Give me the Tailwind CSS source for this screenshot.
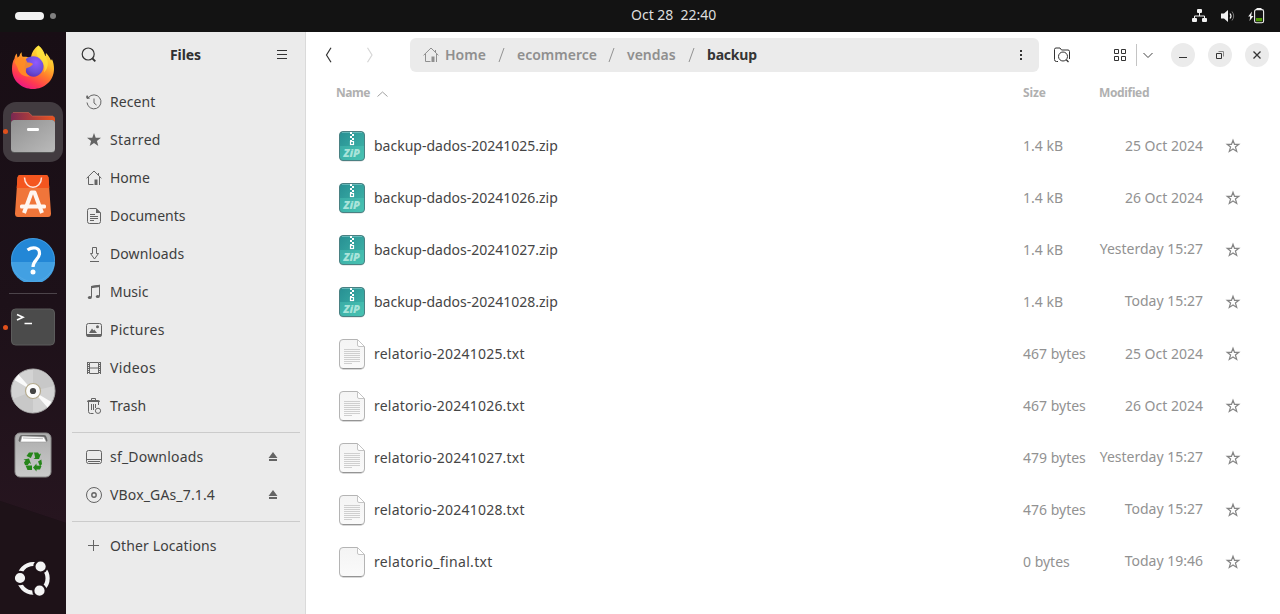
<!DOCTYPE html>
<html lang="en">
<head>
<meta charset="utf-8">
<title>Files</title>
<script src="https://cdn.jsdelivr.net/npm/@tailwindcss/browser@4"></script>
</head>
<body class="h-[614px] w-[1280px] overflow-hidden bg-white font-['Noto_Sans','Open_Sans',sans-serif] text-[14px] text-[#454545]">
<svg width="0" height="0" class="absolute">
  <defs>
    <linearGradient id="teal" x1="0" y1="0" x2="1" y2="1"><stop offset="0" stop-color="#278f93"/><stop offset="1" stop-color="#41b9ab"/></linearGradient>
    <linearGradient id="paper" x1="0" y1="0" x2="0" y2="1"><stop offset="0" stop-color="#f4f4f4"/><stop offset="1" stop-color="#fafafa"/></linearGradient>
    <symbol id="zip" viewBox="0 0 28 32">
      <rect x="1.5" y="2" width="25" height="29.6" rx="4" fill="#000" opacity=".18"/>
      <rect x="1.5" y="1.5" width="25" height="29" rx="3.5" fill="url(#teal)" stroke="#4a8082"/>
      <path d="M2 16h24v11a3 3 0 0 1-3 3H5a3 3 0 0 1-3-3z" fill="#5fe0c8" opacity=".28"/>
      <path d="M4 2.5h20" stroke="#7cc7c8" opacity=".7"/>
      <path d="M12 2h2v2h-2zM14 4h2v2h-2zM12 6h2v2h-2zM14 8h2v2h-2zM12 10h2v1h-2z" fill="#fff"/>
      <rect x="12.5" y="11.500" width="3" height="3" fill="none" stroke="#fff" stroke-width="1.200"/>
      <text x="5.5" y="27" font-family="Open Sans" font-size="10.5" font-weight="800" font-style="italic" fill="#a9e4da" textLength="16.5" lengthAdjust="spacingAndGlyphs">ZiP</text>
    </symbol>
    <symbol id="blank" viewBox="0 0 28 32">
      <path d="M5 2h14l7.5 7.500v18a4 4 0 0 1-4 4H5.500a4 4 0 0 1-4-4V6A4 4 0 0 1 5 2z" fill="#000" opacity=".25"/>
      <path d="M5 1.500h14.500l7 7v18.500a3.500 3.500 0 0 1-3.500 3.500H5a3.500 3.500 0 0 1-3.500-3.500V5A3.500 3.500 0 0 1 5 1.500z" fill="url(#paper)" stroke="#b4b4b4"/>
      <path d="M4.500 30.600h19" stroke="#919191"/>
      <path d="M19.500 1.500v5.500a1.500 1.500 0 0 0 1.500 1.500h5.500z" fill="#fff" stroke="#c4c4c4"/>
    </symbol>
    <symbol id="txt" viewBox="0 0 28 32">
      <use href="#blank" width="28" height="32"/>
      <path d="M6 11.500h16M6 13.500h16M6 15.500h16M6 17.500h16M6 19.500h16M6 21.500h16M6 23.500h16M6 25.500h8" stroke="#cfcfcf"/>
    </symbol>
    <symbol id="star" viewBox="0 0 16 16"><path d="M8 2.300l1.500 4h4.300l-3.400 2.700 1.300 4.400L8 10.900l-3.700 2.500 1.300-4.400-3.400-2.700h4.300z" fill="none" stroke="#858585" stroke-width="1.200"/></symbol>
    <symbol id="house" viewBox="0 0 16 16">
      <path d="M.600 8.300L8 1l7.400 7.300M2.500 7v7.500h5M13.500 7v8M12.500 3v2.500" fill="none" stroke="currentColor"/>
      <path d="M8.500 9.500h3V15h-3z" fill="currentColor"/>
    </symbol>
    <symbol id="eject" viewBox="0 0 10 10"><path d="M5 0l4.500 6h-9zM1 7h8v2H1z" fill="currentColor"/></symbol>
  </defs>
</svg>

<header class="flex h-8 items-center bg-[#131313] text-[#f0f0f0]">
  <div class="flex w-[631px] items-center gap-[6px] pl-[15px]"><span class="h-2 w-[29px] rounded-full bg-[#f2f2f2]"></span><span class="size-[6px] rounded-full bg-[#808080]"></span></div>
  <div class="flex gap-[7px] pb-[3px] text-[14px] whitespace-nowrap text-[#dedede]"><span>Oct 28</span><span>22:40</span></div>
  <div class="ml-auto flex items-center justify-end gap-3 pr-[15px]">
    <svg width="16" height="16" viewBox="0 0 16 16" fill="#f2f2f2"><rect x="6" y="1" width="5" height="4" rx="1"/><rect x="1" y="10" width="5" height="4" rx="1"/><rect x="11" y="10" width="5" height="4" rx="1"/><path d="M8.500 4v4M3.500 11V8h10v3" fill="none" stroke="#f2f2f2"/></svg>
    <svg class="ml-px" width="16" height="16" viewBox="0 0 16 16"><path d="M1 5.500h3L8 2v12L4 10.500H1z" fill="#f2f2f2"/><path d="M10 5.500q2 2.500 0 5" fill="none" stroke="#f2f2f2" stroke-width="1.200"/><path d="M12 3.500q3.400 4.500 0 9" fill="none" stroke="#777"/></svg>
    <svg class="-ml-px" width="18" height="16" viewBox="0 0 18 16"><path d="M5 3.500L1.200 8.500h2L2.500 13l4-5H4.200z" fill="#f2f2f2"/><path d="M9.500 0h5v2h-5z" fill="#f2f2f2"/><rect x="7.600" y="1.600" width="9" height="13.200" rx="1.800" fill="#131313" stroke="#f2f2f2" stroke-width="1.100"/><path d="M9 10h6.200v3.300H9z" fill="#4e9a06"/></svg>
  </div>
</header>

<div class="flex h-[582px]">
  <nav class="relative flex w-[66px] shrink-0 flex-col items-center bg-[#1b1017] py-1">
    <svg class="absolute inset-0" width="66" height="582" viewBox="0 0 66 582"><defs><linearGradient id="wall" x1="0" y1="0" x2="0" y2="1"><stop offset="0" stop-color="#180e15"/><stop offset=".55" stop-color="#1d1119"/><stop offset="1" stop-color="#26151f"/></linearGradient></defs><path d="M0 0h66v491L0 469z" fill="url(#wall)"/><path d="M0 469l66 22v91H0z" fill="#1e1218"/></svg>
    <div class="relative flex size-16 items-center justify-center">
      <svg width="44" height="46" viewBox="0 0 44 46"><defs>
        <linearGradient id="fx" x1=".8" y1="0" x2=".25" y2="1"><stop offset="0" stop-color="#fff14a"/><stop offset=".32" stop-color="#ffbd2c"/><stop offset=".55" stop-color="#ff7a2c"/><stop offset=".78" stop-color="#ff3a50"/><stop offset="1" stop-color="#e8128d"/></linearGradient>
        <radialGradient id="orb" cx=".6" cy=".3" r=".8"><stop offset="0" stop-color="#9059ff"/><stop offset=".6" stop-color="#6a4fd8"/><stop offset="1" stop-color="#5b2bb0"/></radialGradient></defs>
        <path d="M27.500.500c3.500 2.500 5.500 6 6.500 10l1 .5c-.3-1.500-.3-2 0-3 2.800 3 4 5 5 7.500.6-.5.800-.9.900-1.500C42.500 17.500 43 20.500 43 24c0 11.500-9.500 20-21 20S1 35.500 1 24c0-4 .500-7.500 2.500-10.500.3-2 1-3.800 2.200-5l.8 4 2-1.500c.3-1.800 1-2.800 2.200-3.800-.1 2 .1 3.500 1 4.600 2.600-.5 5.800.2 8.300 1.200.2-5 3.500-10 7.500-12.500z" fill="url(#fx)"/>
        <path d="M15 14c4-4 12-3.500 15.500 1s2.500 12-3.500 15.500-14-1-13.500-8.500z" fill="url(#orb)"/>
        <path d="M3.500 17c2-5 6-5.500 11-3l2 3.500c2 0 4 .2 5.600 1.500-2 2.500-4 3.500-6.600 4-1.500 4 0 7 4 8.500-7 .5-12-3-13-9z" fill="#ff8e24" opacity=".9"/>
        <path d="M27.500.500c-3 4-2.500 9 0 12 5 4.500 7 9 5.500 15 3-3 4.500-7 3.500-12-2-6-6-9-9-15z" fill="#ffe93f" opacity=".65"/>
      </svg>
    </div>
    <div class="relative flex h-16 w-full items-center justify-center">
      <div class="flex size-[60px] items-center justify-center rounded-[13px] bg-[#423b40]">
        <svg width="46" height="44" viewBox="0 0 46 44"><defs><linearGradient id="fold"><stop offset="0" stop-color="#7a2852"/><stop offset="1" stop-color="#e95420"/></linearGradient><linearGradient id="grey" x1="0" y1="0" x2="1" y2="1"><stop offset="0" stop-color="#919191"/><stop offset="1" stop-color="#bababa"/></linearGradient></defs>
        <path d="M1 5.500A3 3 0 0 1 4 2.500h14.500l4 3.500H42a3 3 0 0 1 3 3v10H1z" fill="url(#fold)"/><path d="M3 2.500h15.500l4 3.500H43" fill="none" stroke="#e07a5b" opacity=".45"/><rect x="1" y="10" width="44" height="33" rx="3.500" fill="#575757"/><rect x="1" y="10" width="44" height="32" rx="3.500" fill="url(#grey)"/><rect x="17" y="18" width="12" height="3" rx="1.200" fill="#fff"/></svg>
      </div>
      <span class="absolute top-[29px] left-[3px] size-[5px] rounded-full bg-[#e0501c]"></span>
    </div>
    <div class="relative flex size-16 items-center justify-center">
      <svg width="36" height="42" viewBox="0 0 36 42"><path d="M2.500 2.500Q2.600 0 5 0h26q2.400 0 2.500 2.500L36 38.500q0 3.500-3 3.500H3q-3 0-3-3.500z" fill="#f0753a"/><path d="M2.500 2.500Q2.600 0 5 0h26q2.400 0 2.500 2.500L34.300 13H1.700z" fill="#f4561f"/><path d="M9.500 2.500c.3 13 16.700 13 17 0" fill="none" stroke="#fde6dd" stroke-width="1.500"/><path d="M9 38l7.500-20.500h3L27 38" fill="none" stroke="#fff5f0" stroke-width="4" stroke-linejoin="round"/><rect x="5" y="29.500" width="26" height="4" rx="1.500" fill="#fff5f0"/></svg>
    </div>
    <div class="relative flex size-16 items-center justify-center">
      <svg width="44" height="44" viewBox="0 0 44 44"><circle cx="22" cy="22" r="22" fill="#2387d6"/><path d="M0 24h44a22 22 0 0 1-44 0z" fill="#42a0e2"/><circle cx="22" cy="22" r="21.500" fill="none" stroke="#5fb0e8" opacity=".5"/><path d="M16.500 12c5.500-3.800 12-2.500 12 3.200 0 6-6.500 7-6.500 13.800" fill="none" stroke="#fff" stroke-width="3.200"/><circle cx="22" cy="34" r="2.500" fill="#fff"/></svg>
    </div>
    <div class="relative h-[3px] w-12 pt-px"><div class="h-px bg-[#4c444a]"></div></div>
    <div class="relative flex h-16 w-full items-center justify-center">
      <svg width="44" height="38" viewBox="0 0 44 38"><rect x=".500" y="1" width="43" height="36" rx="4" fill="#4b4b4b" stroke="#5c5c5c"/><path d="M6 6.500l6 2.700-6 2.800" fill="none" stroke="#fff" stroke-width="1.600"/><path d="M13.500 15.500H21" stroke="#fff" stroke-width="1.500"/></svg>
      <span class="absolute top-[30px] left-[3px] size-[5px] rounded-full bg-[#e0501c]"></span>
    </div>
    <div class="relative flex size-16 items-center justify-center">
      <svg width="46" height="46" viewBox="0 0 46 46"><circle cx="23" cy="23" r="22" fill="#d3d3d3" stroke="#aaa"/><path d="M23 23L23 1.500A21.500 21.500 0 0 1 44 18zM23 23l0 21.500A21.500 21.500 0 0 1 3 31z" fill="#c8c8c8"/><path d="M23 23L4.500 12l4-5.500zM23 23l18.500 11-4 5.500z" fill="#fafafa"/><circle cx="23" cy="23" r="7.500" fill="#fbfbfb" stroke="#b5ab8e" stroke-width="1.200"/><circle cx="23" cy="23" r="3.100" fill="#444"/></svg>
    </div>
    <div class="relative flex size-16 items-center justify-center">
      <svg width="38" height="46" viewBox="0 0 38 46"><defs><linearGradient id="bin" x1="0" y1="0" x2="0" y2="1"><stop offset="0" stop-color="#adadad"/><stop offset="1" stop-color="#cacaca"/></linearGradient></defs><rect x="1" y="1" width="36" height="44" rx="5" fill="url(#bin)" stroke="#8b8b8b"/><path d="M4.500 8.500L5.500 5q.5-2 2.500-2h22q2 0 2.500 2l1 3.500q-.5 1.500-1.500 1.500H6q-1-.5-1.500-1.500z" fill="#666"/><path d="M6.500 10l1.500-6 22 1 2.500 5z" fill="#fff" stroke="#999" stroke-width=".600"/><path d="M9 6l20 .7" stroke="#bbb"/>
      <g fill="#26851a"><path d="M12.500 24l2.500-3.500h4.500L16.800 26z"/><path d="M20 20.500h4l1.300 2 1.700-1-2 5.500h-5.500l1.700-1.300z"/><path d="M24.500 28.500l3.300-2 .7 4.500-2 2.500z" transform="translate(-.5 1)"/><path d="M27.500 34l-1.500 3.500h-3.500v2l-3.500-4 3.500-4v2z"/><path d="M11.500 33.500H18v4.500h-4.500z"/><path d="M9.500 27.500l5.500-1 2 5.500-1.700-1-1.500 2H11l-1-2.500 1.500-2z"/></g></svg>
    </div>
    <div class="relative mt-auto flex size-16 items-center justify-center">
      <svg width="38" height="38" viewBox="0 0 38 38"><circle cx="19.300" cy="19.300" r="14.300" fill="none" stroke="#f4f4f4" stroke-width="4.200"/><g fill="#f4f4f4" stroke="#1e1218" stroke-width="2.200"><circle cx="6" cy="19" r="6.200"/><circle cx="26.600" cy="7.500" r="6.200"/><circle cx="25.500" cy="31.700" r="6.200"/></g></svg>
    </div>
  </nav>

  <aside class="flex w-[240px] shrink-0 flex-col border-r border-[#dadada] bg-[#ebebeb]">
    <div class="flex h-[46px] items-center pr-[17px] pl-[15px]">
      <svg width="16" height="16" viewBox="0 0 16 16" fill="none" stroke="#333"><circle cx="7.200" cy="7" r="6" stroke-width="1.200"/><path d="M11.500 11.500l2.800 2.800" stroke-width="1.800"/></svg>
      <h1 class="ml-[73px] pb-0.5 text-[14px] font-bold tracking-[-0.1px] text-[#303030]">Files</h1>
      <svg class="mr-px ml-auto" width="10" height="10" viewBox="0 0 10 10"><path d="M0 .5h10M0 4.500h10M0 8.500h10" stroke="#333" stroke-width="1"/></svg>
    </div>
    <ul class="mt-[5px] text-[#3e3e3e] [&_span]:pb-0.5 [&_svg]:text-[#646464]">
      <li class="flex h-[38px] items-center gap-2 pl-5"><svg width="16" height="16" viewBox="0 0 16 16" fill="none" stroke="currentColor"><path d="M2.500 3.500a7 7 0 1 1-1.500 5M8 4.500V9l2.500 2"/><path d="M0 3l1-2 3 3.500-3 .5z" fill="currentColor" stroke="none"/></svg><span class="tracking-[0.1px]">Recent</span></li>
      <li class="flex h-[38px] items-center gap-2 pl-5"><svg width="16" height="16" viewBox="0 0 16 16" fill="currentColor"><path d="M8 1l1.700 4.800H15l-4.100 3.300L12.300 14 8 11.100 3.700 14l1.400-4.900L1 5.800h5.300z"/></svg><span class="tracking-[0.35px]">Starred</span></li>
      <li class="flex h-[38px] items-center gap-2 pl-5"><svg width="16" height="16"><use href="#house"/></svg><span>Home</span></li>
      <li class="flex h-[38px] items-center gap-2 pl-5"><svg width="16" height="16" viewBox="0 0 16 16" fill="none" stroke="currentColor"><path d="M3.500.500H10l4.500 4.500v8.500a2 2 0 0 1-2 2h-9a2 2 0 0 1-2-2v-11a2 2 0 0 1 2-2z"/><path d="M10 0v5h5z" fill="currentColor" stroke="none"/><path d="M4 6.500h5M4 8.500h8M4 10.500h8M4 12.500h4"/></svg><span>Documents</span></li>
      <li class="flex h-[38px] items-center gap-2 pl-5"><svg width="16" height="16" viewBox="0 0 16 16" fill="none" stroke="currentColor"><path d="M6.500 1.500h4v6h2L8.500 13l-4-5.500h2zM4 15.500h9"/></svg><span class="tracking-[0.1px]">Downloads</span></li>
      <li class="flex h-[38px] items-center gap-2 pl-5"><svg width="16" height="16" viewBox="0 0 16 16" fill="none" stroke="currentColor"><path d="M5.500 13V2.500l8-1.200V12"/><path d="M5 2l9-1.300V3L5 4.300z" fill="currentColor" stroke="none"/><ellipse cx="3.800" cy="13.500" rx="2" ry="1.600" fill="currentColor" stroke="none"/><ellipse cx="11.800" cy="12.500" rx="2" ry="1.600" fill="currentColor" stroke="none"/></svg><span>Music</span></li>
      <li class="flex h-[38px] items-center gap-2 pl-5"><svg width="16" height="16" viewBox="0 0 16 16" fill="currentColor"><rect x=".500" y="1.500" width="15" height="12.500" rx="2" fill="none" stroke="currentColor"/><path d="M0 12h16q0 3-2 3H2q-2 0-2-3zM3 11l3-4.500 1.500 2 .8-1 2.700 3.500z"/><circle cx="11.500" cy="4.700" r="1.500"/></svg><span class="tracking-[0.25px]">Pictures</span></li>
      <li class="flex h-[38px] items-center gap-2 pl-5"><svg width="16" height="16" viewBox="0 0 16 16" fill="none" stroke="currentColor"><path d="M3.500 2.500h9v11h-9zM3.500 8h9"/><path d="M1.500 2v12M14.500 2v12"/><path d="M2.500 2v12M13.500 2v12" stroke-dasharray="1 1"/></svg><span class="tracking-[0.4px]">Videos</span></li>
      <li class="flex h-[38px] items-center gap-2 pl-5"><svg width="16" height="16" viewBox="0 0 16 16" fill="none" stroke="currentColor"><path d="M1 4q0-2 2-2h9q2 0 2 2z" fill="currentColor" stroke="none"/><path d="M5.500 2V.500h4V2M2.500 4v9.500q0 2 2 2h3M12.500 4v3M5.500 6v6M7.500 6v6M9.500 6v4"/><circle cx="12" cy="12.800" r="2.600"/></svg><span class="tracking-[0.1px]">Trash</span></li>
    </ul>
    <hr class="mt-[7px] mr-[5px] mb-[5px] ml-[6px] border-[#cbcbcb]">
    <ul class="text-[#3e3e3e] [&_span]:pb-0.5 [&_svg]:text-[#646464]">
      <li class="flex h-[38px] items-center gap-2 pr-[27px] pl-5"><svg width="16" height="16" viewBox="0 0 16 16" fill="none" stroke="currentColor"><rect x=".500" y="1.500" width="15" height="13" rx="2"/><path d="M1 10.500h14M2 12.500h12"/></svg><span class="tracking-[0.2px]">sf_Downloads</span><svg class="ml-auto" width="10" height="10"><use href="#eject"/></svg></li>
      <li class="flex h-[38px] items-center gap-2 pr-[27px] pl-5"><svg width="16" height="16" viewBox="0 0 16 16" fill="none" stroke="currentColor"><circle cx="8" cy="8" r="7.500"/><circle cx="8" cy="8" r="2.200" stroke-width="1.400"/></svg><span class="tracking-[0.15px]">VBox_GAs_7.1.4</span><svg class="ml-auto" width="10" height="10"><use href="#eject"/></svg></li>
    </ul>
    <hr class="mt-[7px] mr-[5px] mb-[5px] ml-[6px] border-[#cbcbcb]">
    <div class="flex h-[38px] items-center gap-2 pl-5 text-[#3e3e3e]"><svg width="16" height="16" viewBox="0 0 16 16"><path d="M2 7.500h11M7.500 2v11" stroke="#646464"/></svg><span class="pb-0.5 tracking-[0.12px]">Other Locations</span></div>
  </aside>

  <main class="flex flex-1 flex-col">
    <div class="flex h-[46px] items-center">
      <svg class="ml-[18px]" width="10" height="16" viewBox="0 0 10 16"><path d="M7 .7L2.500 8 7 15.300" fill="none" stroke="#333" stroke-width="1.200"/></svg>
      <svg class="ml-[31px]" width="10" height="16" viewBox="0 0 10 16"><path d="M2.500 .7L7 8l-4.500 7.300" fill="none" stroke="#d6d6d6" stroke-width="1.200"/></svg>
      <div class="ml-[35px] flex h-[34px] w-[629px] items-center rounded-[6px] bg-[#ebebeb] px-[13px] font-semibold text-[#8f8f8f] [&>span]:pb-0.5">
        <svg width="16" height="16"><use href="#house"/></svg>
        <span class="ml-[6px] w-[41px]">Home</span>
        <svg class="ml-[12px]" width="8" height="16" viewBox="0 0 8 16"><path d="M1 15L6 1" stroke="#929292"/></svg>
        <span class="ml-[11px] w-[79px]">ecommerce</span>
        <svg class="ml-[12px]" width="8" height="16" viewBox="0 0 8 16"><path d="M1 15L6 1" stroke="#929292"/></svg>
        <span class="ml-[11px] w-[49px]">vendas</span>
        <svg class="ml-[12px]" width="8" height="16" viewBox="0 0 8 16"><path d="M1 15L6 1" stroke="#929292"/></svg>
        <span class="ml-[11px] font-bold tracking-[-0.2px] text-[#353535]">backup</span>
        <svg class="mr-[3px] ml-auto" width="4" height="10" viewBox="0 0 4 10" fill="#333"><path d="M1 0h2v2H1zM1 4h2v2H1zM1 8h2v2H1z"/></svg>
      </div>
      <svg class="ml-[15px]" width="16" height="16" viewBox="0 0 16 16" fill="none" stroke="#333"><path d="M4 14.500H2.500a2 2 0 0 1-2-2v-10a1.500 1.500 0 0 1 1.500-1.500h4l1.500 2H14a1.500 1.500 0 0 1 1.500 1.500V12"/><circle cx="9" cy="9.500" r="4.500"/><path d="M12.300 12.800l2.200 2.200" stroke-width="1.300"/></svg>
      <svg class="ml-[44px]" width="12" height="12" viewBox="0 0 12 12" fill="none" stroke="#333"><path d="M.500.500h4v4h-4zM7.500.500h4v4h-4zM.500 7.500h4v4h-4zM7.500 7.500h4v4h-4z"/></svg>
      <div class="ml-[10px] h-[22px] w-px bg-[#c4c4c4]"></div>
      <svg class="ml-[6px]" width="11" height="7" viewBox="0 0 11 7"><path d="M.500 1l4.500 4.500 4.500-4.500" fill="none" stroke="#444" stroke-width="1"/></svg>
      <div class="ml-[17px] flex gap-[13px]">
        <div class="flex size-6 items-center justify-center rounded-full bg-[#ebebeb]"><svg width="8" height="8" viewBox="0 0 8 8"><path d="M0 6.500h8" stroke="#333"/></svg></div>
        <div class="flex size-6 items-center justify-center rounded-full bg-[#ebebeb]"><svg width="8" height="8" viewBox="0 0 8 8" fill="none" stroke="#333"><path d="M.500 2.500h5v5h-5z"/><path d="M2.500.500h5v5" stroke="#8a8a8a"/></svg></div>
        <div class="flex size-6 items-center justify-center rounded-full bg-[#ebebeb]"><svg width="8" height="8" viewBox="0 0 8 8"><path d="M.500.500l7 7M7.500.500l-7 7" stroke="#333" stroke-width="1.300"/></svg></div>
      </div>
    </div>
    <div class="flex h-[42px] items-start pt-[5px] pl-[30px] text-[12px] leading-[19px] font-bold text-[#b0b0b0]">
      <div class="flex w-[687px] items-center gap-[8px]"><span class="w-[33px] tracking-[-0.5px]">Name</span><svg class="mt-[3px]" width="11" height="6" viewBox="0 0 11 6"><path d="M.500 5.500l5-4.500 5 4.500" fill="none" stroke="#a0a0a0"/></svg></div>
      <div class="w-[76px] tracking-[-0.1px]">Size</div>
      <div class="tracking-[-0.35px]">Modified</div>
    </div>
    <ul class="[&>li]:flex [&>li]:h-[52px] [&>li]:items-center [&>li]:pl-8 [&>li>span]:whitespace-nowrap">
      <li><svg width="28" height="32"><use href="#zip"/></svg><span class="ml-2 w-[649px] pb-0.5">backup-dados-20241025.zip</span><span class="w-[72px] pb-0.5 text-[#929292]">1.4 kB</span><span class="w-[108px] pb-0.5 text-right text-[#929292]">25 Oct 2024</span><svg class="ml-[22px]" width="16" height="16"><use href="#star"/></svg></li>
      <li><svg width="28" height="32"><use href="#zip"/></svg><span class="ml-2 w-[649px] pb-0.5">backup-dados-20241026.zip</span><span class="w-[72px] pb-0.5 text-[#929292]">1.4 kB</span><span class="w-[108px] pb-0.5 text-right text-[#929292]">26 Oct 2024</span><svg class="ml-[22px]" width="16" height="16"><use href="#star"/></svg></li>
      <li><svg width="28" height="32"><use href="#zip"/></svg><span class="ml-2 w-[649px] pb-0.5">backup-dados-20241027.zip</span><span class="w-[72px] pb-0.5 text-[#929292]">1.4 kB</span><span class="w-[108px] pb-1 text-right text-[#929292]">Yesterday 15:27</span><svg class="ml-[22px]" width="16" height="16"><use href="#star"/></svg></li>
      <li><svg width="28" height="32"><use href="#zip"/></svg><span class="ml-2 w-[649px] pb-0.5">backup-dados-20241028.zip</span><span class="w-[72px] pb-0.5 text-[#929292]">1.4 kB</span><span class="w-[108px] pb-1 text-right text-[#929292]">Today 15:27</span><svg class="ml-[22px]" width="16" height="16"><use href="#star"/></svg></li>
      <li><svg width="28" height="32"><use href="#txt"/></svg><span class="ml-2 w-[649px] pb-0.5 tracking-[0.21px]">relatorio-20241025.txt</span><span class="w-[72px] pb-0.5 text-[#929292]">467 bytes</span><span class="w-[108px] pb-0.5 text-right text-[#929292]">25 Oct 2024</span><svg class="ml-[22px]" width="16" height="16"><use href="#star"/></svg></li>
      <li><svg width="28" height="32"><use href="#txt"/></svg><span class="ml-2 w-[649px] pb-0.5 tracking-[0.21px]">relatorio-20241026.txt</span><span class="w-[72px] pb-0.5 text-[#929292]">467 bytes</span><span class="w-[108px] pb-0.5 text-right text-[#929292]">26 Oct 2024</span><svg class="ml-[22px]" width="16" height="16"><use href="#star"/></svg></li>
      <li><svg width="28" height="32"><use href="#txt"/></svg><span class="ml-2 w-[649px] pb-0.5 tracking-[0.21px]">relatorio-20241027.txt</span><span class="w-[72px] pb-0.5 text-[#929292]">479 bytes</span><span class="w-[108px] pb-1 text-right text-[#929292]">Yesterday 15:27</span><svg class="ml-[22px]" width="16" height="16"><use href="#star"/></svg></li>
      <li><svg width="28" height="32"><use href="#txt"/></svg><span class="ml-2 w-[649px] pb-0.5 tracking-[0.21px]">relatorio-20241028.txt</span><span class="w-[72px] pb-0.5 text-[#929292]">476 bytes</span><span class="w-[108px] pb-1 text-right text-[#929292]">Today 15:27</span><svg class="ml-[22px]" width="16" height="16"><use href="#star"/></svg></li>
      <li><svg width="28" height="32"><use href="#blank"/></svg><span class="ml-2 w-[649px] pb-0.5 tracking-[0.34px]">relatorio_final.txt</span><span class="w-[72px] pb-0.5 text-[#929292]">0 bytes</span><span class="w-[108px] pb-1 text-right text-[#929292]">Today 19:46</span><svg class="ml-[22px]" width="16" height="16"><use href="#star"/></svg></li>
    </ul>
  </main>
</div>
</body>
</html>
